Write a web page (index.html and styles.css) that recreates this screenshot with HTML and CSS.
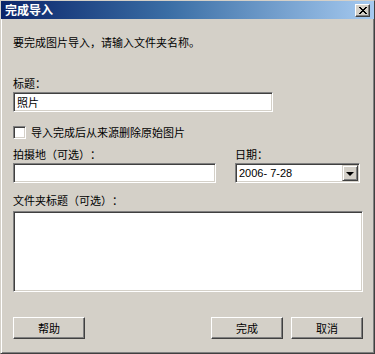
FILE: index.html
```html
<!DOCTYPE html>
<html lang="zh-CN">
<head>
<meta charset="utf-8">
<title>完成导入</title>
<link rel="stylesheet" href="styles.css">
</head>
<body>
<div class="window">
  <div class="titlebar">
    <span class="title">完成导入</span>
    <span class="close">
      <svg width="8" height="7" viewBox="0 0 8 7"><path d="M0 0h2v1H0z M6 0h2v1H6z M1 1h2v1H1z M5 1h2v1H5z M2 2h4v1H2z M3 3h2v1H3z M2 4h4v1H2z M1 5h2v1H1z M5 5h2v1H5z M0 6h2v1H0z M6 6h2v1H6z" fill="#000"/></svg>
    </span>
  </div>
  <div class="content">
    <p class="intro">要完成图片导入，请输入文件夹名称。</p>
    <div class="label lbl-title">标题：</div>
    <div class="field field-title">照片</div>
    <div class="check-row">
      <span class="checkbox"></span>
      <span class="check-label">导入完成后从来源删除原始图片</span>
    </div>
    <div class="two-col">
      <div class="col col-loc">
        <div class="label">拍摄地（可选）：</div>
        <div class="field field-loc"></div>
      </div>
      <div class="col col-date">
        <div class="label">日期：</div>
        <div class="combo">
          <span class="combo-text">2006-&nbsp;7-28</span>
          <span class="combo-btn"><span class="arrow"></span></span>
        </div>
      </div>
    </div>
    <div class="label lbl-folder">文件夹标题（可选）：</div>
    <div class="field textarea"></div>
    <div class="buttons">
      <span class="btn">帮助</span>
      <span class="spacer"></span>
      <span class="btn">完成</span>
      <span class="btn">取消</span>
    </div>
  </div>
</div>
</body>
</html>
```
FILE: styles.css
```css
* { box-sizing: border-box; }
html, body { margin: 0; padding: 0; background: #d4d0c8; }
body {
  font-family: "Noto Sans CJK SC", "Noto Sans", sans-serif;
  font-size: 11px;
  color: #000;
  text-spacing-trim: space-all;
}
.window {
  width: 375px;
  height: 354px;
  background: #d4d0c8;
  border-style: solid;
  border-width: 1px;
  border-color: #d4d0c8 #404040 #404040 #d4d0c8;
  box-shadow: inset 1px 1px #ffffff, inset -1px -1px #808080;
  display: flex;
  flex-direction: column;
}
.titlebar {
  height: 18px;
  background: linear-gradient(to right, #0a246a 0%, #3a6ea5 45%, #a6caf0 100%);
  display: flex;
  align-items: center;
  justify-content: space-between;
  padding: 0 4px 0 4px;
}
.title {
  color: #fff;
  font-weight: bold;
  font-size: 12px;
  line-height: 18px;
}
.close {
  width: 15px;
  height: 13px;
  background: #d4d0c8;
  border-style: solid;
  border-width: 1px;
  border-color: #ffffff #404040 #404040 #ffffff;
  box-shadow: inset -1px -1px #808080;
  display: flex;
  align-items: center;
  justify-content: center;
  margin-top: 1px;
}
.close svg { display: block; }
.content {
  padding: 0 11px 0 12px;
  display: flex;
  flex-direction: column;
}
.intro {
  margin: 16px 0 0 0;
  line-height: 14px;
}
.label { line-height: 14px; }
.lbl-title { margin-top: 27px; }
.field {
  background: #fff;
  border-style: solid;
  border-width: 1px;
  border-color: #808080 #ffffff #ffffff #808080;
  box-shadow: inset 1px 1px #404040, inset -1px -1px #d4d0c8;
  height: 20px;
  margin-top: 2px;
}
.field-title {
  width: 260px;
  padding: 0 3px;
  line-height: 18px;
}
.check-row {
  margin-top: 13px;
  display: flex;
  align-items: center;
  height: 14px;
}
.checkbox {
  width: 13px;
  height: 13px;
  background: #fff;
  border-style: solid;
  border-width: 1px;
  border-color: #808080 #ffffff #ffffff #808080;
  box-shadow: inset 1px 1px #404040, inset -1px -1px #d4d0c8;
}
.check-label { margin-left: 5px; line-height: 14px; }
.two-col {
  margin-top: 8px;
  display: flex;
  gap: 19px;
}
.col-loc { width: 203px; }
.col-date { width: 125px; }
.field-loc { width: 203px; }
.combo {
  margin-top: 2px;
  height: 20px;
  width: 125px;
  background: #fff;
  border-style: solid;
  border-width: 1px;
  border-color: #808080 #ffffff #ffffff #808080;
  box-shadow: inset 1px 1px #404040, inset -1px -1px #d4d0c8;
  display: flex;
  align-items: center;
  padding: 1px;
}
.combo-text {
  flex: 1;
  font-family: "Liberation Sans", Arial, sans-serif;
  font-size: 11px;
  padding-left: 2px;
}
.combo-btn {
  width: 16px;
  height: 16px;
  background: #d4d0c8;
  border-style: solid;
  border-width: 1px;
  border-color: #d4d0c8 #404040 #404040 #d4d0c8;
  box-shadow: inset 1px 1px #ffffff, inset -1px -1px #808080;
  display: flex;
  align-items: center;
  justify-content: center;
}
.arrow {
  width: 0;
  height: 0;
  border-left: 4px solid transparent;
  border-right: 4px solid transparent;
  border-top: 4px solid #000;
  margin-top: 1px;
}
.lbl-folder { margin-top: 10px; }
.textarea {
  margin-top: 4px;
  width: 350px;
  height: 81px;
}
.buttons {
  margin-top: 25px;
  width: 350px;
  display: flex;
  gap: 8px;
}
.spacer { flex: 1; }
.btn {
  width: 72px;
  height: 22px;
  background: #d4d0c8;
  border-style: solid;
  border-width: 1px;
  border-color: #ffffff #404040 #404040 #ffffff;
  box-shadow: inset -1px -1px #808080, inset 1px 1px #d4d0c8;
  display: flex;
  align-items: center;
  justify-content: center;
  line-height: 14px;
}
```
